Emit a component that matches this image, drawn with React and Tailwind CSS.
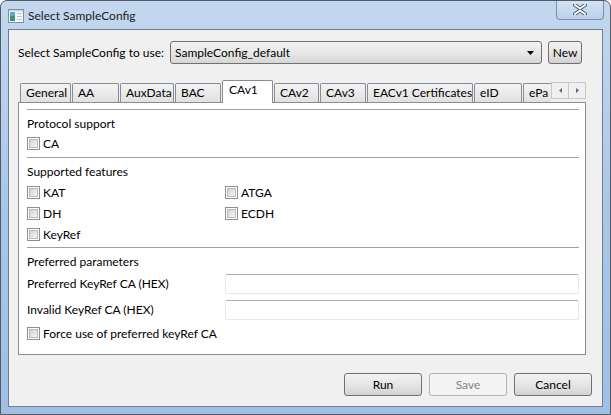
import React from 'react';

const font = { fontFamily: 'Lato, "Liberation Sans", sans-serif' };

const Check = ({ label }) => (
  <div className="flex items-center gap-[3px] h-[21px]">
    <span className="w-[13px] h-[13px] border border-[#8f8f8f] bg-white p-[1px] shrink-0">
      <span className="block w-full h-full border border-[#b9b9b9] bg-gradient-to-br from-[#d2d2d2] to-[#f7f7f7]" />
    </span>
    <span>{label}</span>
  </div>
);

const Sep = () => <div className="h-px bg-[#a0a0a0]" />;

const TextField = () => (
  <div className="flex-1 h-[20px] rounded-[2px] border border-[#e3e9ef] border-t-[#abadb3] bg-white" />
);

const tabs = [
  { name: 'General', w: 'w-[51px]' },
  { name: 'AA', w: 'w-[47px]' },
  { name: 'AuxData', w: 'w-[54px]' },
  { name: 'BAC', w: 'w-[46px]' },
  { name: 'CAv1', w: 'w-[51px]', active: true },
  { name: 'CAv2', w: 'w-[45px]' },
  { name: 'CAv3', w: 'w-[46px]' },
  { name: 'EACv1 Certificates', w: 'w-[106px]' },
  { name: 'eID', w: 'w-[48px]' },
];

const WinButton = ({ children, disabled, width = 'w-[78px]', className = '' }) => (
  <div
    className={
      `h-[23px] ${width} shrink-0 rounded-[3px] border flex items-center justify-center ` +
      (disabled
        ? 'border-[#adb2b5] bg-[#f4f4f4] text-[#838383] '
        : 'border-[#707070] bg-gradient-to-b from-[#f2f2f2] via-[#e6e6e6] to-[#d2d2d2] text-black ') +
      className
    }
  >
    {children}
  </div>
);

const App = () => {
  return (
    <div
      className="w-[611px] h-[415px] flex flex-col rounded-t-[7px] border border-[#4e5b6d] bg-gradient-to-b from-[#c3d8ef] via-[#aac7e7] to-[#a0bfe2] text-[12px] text-black overflow-hidden"
      style={font}
    >
      <div className="relative h-[28px] flex items-center pl-[7px] shrink-0">
        <svg width="16" height="14" viewBox="0 0 16 14" className="mt-[2px]">
          <rect x="0.5" y="0.5" width="15" height="13" fill="#f4f7fb" stroke="#7d8ea3" />
          <rect x="2" y="3" width="5" height="9" fill="#3f8f7a" />
          <rect x="2" y="3" width="5" height="4" fill="#5aa7d8" />
          <rect x="9" y="4" width="5" height="1" fill="#b9c6d4" />
          <rect x="9" y="7" width="5" height="1" fill="#b9c6d4" />
          <rect x="9" y="10" width="5" height="1" fill="#b9c6d4" />
          <rect x="1" y="1" width="14" height="1.5" fill="#c9d6e6" />
        </svg>
        <span className="ml-[4px] mt-[2px] text-[#1b1b1b]">Select SampleConfig</span>
        <div className="absolute right-[6px] top-[-1px] w-[48px] h-[20px] rounded-b-[4px] border border-t-0 border-[#7d90a8] bg-gradient-to-b from-[#d6e4f3] to-[#bad0ea] flex items-center justify-center">
          <svg width="14" height="11" viewBox="0 0 14 11">
            <path d="M2 1 L7 4.5 L12 1 M2 10 L7 6.5 L12 10" fill="none" stroke="#46566a" strokeWidth="3.6" strokeLinecap="square" />
            <path d="M2 1 L7 4.5 L12 1 M2 10 L7 6.5 L12 10" fill="none" stroke="#ffffff" strokeWidth="1.8" strokeLinecap="square" />
          </svg>
        </div>
      </div>

      <div className="flex-1 mx-[7px] mb-[7px] border border-[#6f7f93] bg-[#f0f0f0] flex flex-col">
        <div className="flex items-center h-[23px] mt-[11px] pl-[9px] pr-[20px]">
          <span className="whitespace-nowrap shrink-0">Select SampleConfig to use:</span>
          <div className="ml-auto w-[372px] shrink-0 h-[23px] rounded-[3px] border border-[#707070] bg-gradient-to-b from-[#f2f2f2] via-[#e8e8e8] to-[#d6d6d6] flex items-center pl-[4px] pr-[7px]">
            <span className="flex-1">SampleConfig_default</span>
            <svg width="7" height="4" viewBox="0 0 7 4">
              <path d="M0 0 H7 L3.5 4 Z" fill="#000" />
            </svg>
          </div>
          <WinButton width="w-[34px]" className="ml-[6px]">New</WinButton>
        </div>

        <div className="mt-[16px] ml-[9px] mr-[16px] flex flex-col">
          <div className="h-[22px] flex items-end pl-[2px]">
            {tabs.map((t, i) =>
              t.active ? (
                <div
                  key={t.name}
                  className={`relative z-10 -mb-px ${t.w} h-[23px] ${i ? 'ml-px' : ''} border border-b-0 border-[#898c95] bg-white pl-[6px] rounded-t-[2px]`}
                >
                  {t.name}
                </div>
              ) : (
                <div
                  key={t.name}
                  className={`${t.w} h-[19px] ${i ? 'ml-px' : ''} border border-b-0 border-[#898c95] bg-gradient-to-b from-[#f3f3f3] to-[#e1e1e1] pl-[5px] rounded-t-[2px] whitespace-nowrap`}
                >
                  {t.name}
                </div>
              )
            )}
            <div className="ml-px w-[28px] h-[19px] border border-b-0 border-r-0 border-[#898c95] bg-gradient-to-b from-[#f3f3f3] to-[#e1e1e1] pl-[5px] overflow-hidden whitespace-nowrap rounded-tl-[2px]">
              ePa
            </div>
            <div className="self-end mb-[3px] flex h-[17px]">
              <div className="w-[18px] h-[17px] border border-[#c8c8c8] bg-[#f0f0f0] flex items-center justify-center">
                <svg width="3" height="5" viewBox="0 0 3 5"><path d="M3 0 V5 L0 2.5 Z" fill="#4d6b93" /></svg>
              </div>
              <div className="w-[17px] h-[17px] border border-l-0 border-[#c8c8c8] bg-[#f0f0f0] flex items-center justify-center">
                <svg width="3" height="5" viewBox="0 0 3 5"><path d="M0 0 V5 L3 2.5 Z" fill="#4d6b93" /></svg>
              </div>
            </div>
          </div>

          <div className="h-[253px] border border-[#898c95] bg-white pl-[8px] pr-[6px] pt-[6px] flex flex-col">
            <Sep />
            <div className="h-[20px] mt-[4px] flex items-center">Protocol support</div>
            <div className="h-[19px] flex items-center">
              <Check label="CA" />
            </div>
            <div className="mt-[4px]">
              <Sep />
            </div>
            <div className="h-[20px] mt-[4px] flex items-center">Supported features</div>
            <div className="grid grid-cols-[198px_1fr]">
              <Check label="KAT" />
              <Check label="ATGA" />
              <Check label="DH" />
              <Check label="ECDH" />
              <Check label="KeyRef" />
            </div>
            <div className="mt-[2px]">
              <Sep />
            </div>
            <div className="h-[20px] mt-[4px] flex items-center">Preferred parameters</div>
            <div className="mt-[2px] flex items-center">
              <span className="w-[198px]">Preferred KeyRef CA (HEX)</span>
              <TextField />
            </div>
            <div className="mt-[6px] flex items-center">
              <span className="w-[198px]">Invalid KeyRef CA (HEX)</span>
              <TextField />
            </div>
            <div className="mt-[3px]">
              <Check label="Force use of preferred keyRef CA" />
            </div>
          </div>
        </div>

        <div className="mt-[18px] flex justify-end gap-[7px] pr-[10px]">
          <WinButton>Run</WinButton>
          <WinButton disabled>Save</WinButton>
          <WinButton>Cancel</WinButton>
        </div>
      </div>
    </div>
  );
};

export default App;
